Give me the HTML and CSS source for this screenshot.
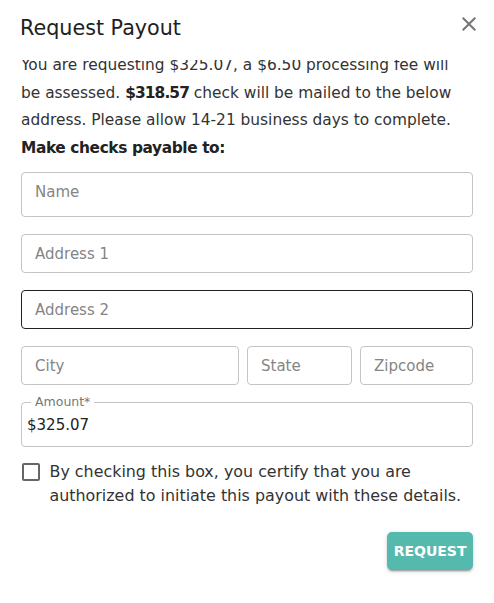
FILE: index.html
```html
<!DOCTYPE html>
<html lang="en">
<head>
<meta charset="utf-8">
<title>Request Payout</title>
<link rel="stylesheet" href="styles.css">
</head>
<body>
<div class="dialog">
  <header class="dialog-head">
    <h2 class="dialog-title">Request Payout</h2>
    <button class="close-btn" type="button" aria-label="close">
      <svg viewBox="0 0 24 24" width="24" height="24"><path d="M19 6.41 17.59 5 12 10.59 6.41 5 5 6.41 10.59 12 5 17.59 6.41 19 12 13.41 17.59 19 19 17.59 13.41 12z"/></svg>
    </button>
  </header>
  <div class="dialog-body">
    <div class="scroll-content">
      <p class="intro">You are requesting $325.07, a $6.50 processing fee will<br>be assessed. <strong>$318.57</strong> check will be mailed to the below<br>address. Please allow 14-21 business days to complete.</p>
      <p class="payable">Make checks payable to:</p>
      <form class="payout-form">
        <div class="fields">
          <input class="input tall" placeholder="Name">
          <input class="input" placeholder="Address 1">
          <input class="input active" placeholder="Address 2">
          <div class="row">
            <input class="input" placeholder="City">
            <input class="input" placeholder="State">
            <input class="input" placeholder="Zipcode">
          </div>
          <div class="outlined">
            <label class="float-label">Amount*</label>
            <input class="amount" value="$325.07">
          </div>
        </div>
        <label class="check-row">
          <span class="checkbox"></span>
          <span class="check-text">By checking this box, you certify that you are<br>authorized to initiate this payout with these details.</span>
        </label>
        <div class="actions">
          <button class="request-btn" type="button">REQUEST</button>
        </div>
      </form>
    </div>
  </div>
</div>
</body>
</html>
```
FILE: styles.css
```css
* { box-sizing: border-box; }
html, body { margin: 0; height: 100%; }
body {
  background: #fff;
  font-family: "DejaVu Sans", "Liberation Sans", sans-serif;
  color: #333;
}
.dialog {
  height: 603px;
  display: flex;
  flex-direction: column;
  overflow: hidden;
}
.dialog-head {
  flex: none;
  height: 60px;
  display: flex;
  justify-content: space-between;
  align-items: flex-start;
  padding: 14px 13px 18px 20px;
}
.dialog-title {
  margin: 0;
  font-size: 20.7px;
  line-height: 28px;
  font-weight: 400;
  color: #212121;
}
.close-btn {
  width: 24px;
  height: 24px;
  margin-top: -2px;
  padding: 0;
  border: 0;
  background: none;
  color: #757575;
  display: flex;
  cursor: pointer;
}
.close-btn svg { fill: currentColor; }
.dialog-body {
  flex: 1;
  overflow: hidden;
  padding: 0 21px;
}
.scroll-content { margin-top: -8px; }
.intro {
  margin: 0;
  font-size: 15.4px;
  line-height: 27.7px;
  white-space: nowrap;
}
.intro strong {
  font-weight: 700;
  color: #222;
  letter-spacing: -0.9px;
}
.payable {
  margin: 0;
  font-size: 15.4px;
  line-height: 27.7px;
  font-weight: 700;
  letter-spacing: -0.4px;
  color: #222;
}
.payout-form { margin-top: 9.5px; }
.fields {
  display: flex;
  flex-direction: column;
  gap: 17px;
}
.input {
  display: block;
  width: 100%;
  min-width: 0;
  height: 39px;
  margin: 0;
  padding: 0 13px;
  border: 1px solid #c4c4c4;
  border-radius: 4px;
  background: #fff;
  font-family: inherit;
  font-size: 15px;
  color: #222;
  outline: none;
}
.input.tall {
  height: 45px;
  padding-bottom: 5px;
}
.input.active { border-color: #212121; }
.input::placeholder { color: #858585; opacity: 1; }
.row {
  display: grid;
  grid-template-columns: 218px 105px 1fr;
  gap: 8px;
}
.outlined {
  position: relative;
  height: 45px;
  border: 1px solid #c4c4c4;
  border-radius: 4px;
}
.float-label {
  position: absolute;
  top: -8px;
  left: 9px;
  padding: 0 4px;
  background: #fff;
  font-size: 12.5px;
  line-height: 14px;
  color: #777;
}
.amount {
  display: block;
  width: 100%;
  height: 43px;
  margin: 0;
  padding: 0 5px;
  border: 0;
  background: transparent;
  font-family: inherit;
  font-size: 15px;
  color: #222;
  outline: none;
}
.check-row {
  display: flex;
  align-items: flex-start;
  gap: 9.5px;
  margin-top: 12.2px;
  cursor: pointer;
}
.checkbox {
  flex: none;
  width: 18px;
  height: 18px;
  margin-top: 3.8px;
  margin-left: 1px;
  border: 2px solid #666;
  border-radius: 2px;
}
.check-text {
  font-size: 15.9px;
  line-height: 24px;
  color: #333;
  white-space: nowrap;
}
.actions {
  display: flex;
  justify-content: flex-end;
  margin-top: 24.8px;
}
.request-btn {
  height: 38px;
  padding: 0 6.5px;
  border: 0;
  border-radius: 5px;
  background: #56b9ad;
  color: #fff;
  font-family: inherit;
  font-size: 14px;
  font-weight: 700;
  box-shadow: 0 3px 1px -2px rgba(0,0,0,.2), 0 2px 2px 0 rgba(0,0,0,.14), 0 1px 5px 0 rgba(0,0,0,.12);
  cursor: pointer;
}
```
